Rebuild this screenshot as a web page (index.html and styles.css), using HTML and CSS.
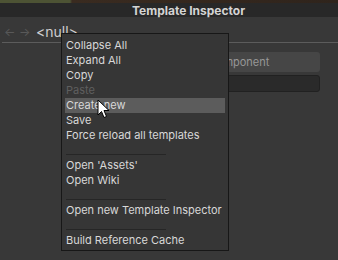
FILE: index.html
```html
<!DOCTYPE html>
<html lang="en">
  <head>
    <meta charset="UTF-8" />
    <title>Template Inspector</title>
    <link rel="stylesheet" href="styles.css">
  </head>
  <body>
    <div class="window">
      <div class="wallpaper"></div>
      <div class="titlebar">Template Inspector</div>
      <div class="toolbar">
        <span class="nav">&larr;</span>
        <span class="nav">&rarr;</span>
        <span class="target">&lt;null&gt;</span>
      </div>
      <div class="rule"></div>
      <div class="content">
        <div class="add-button">Add Component</div>
        <div class="search-field"></div>
      </div>

      <ul class="menu">
        <li class="item">Collapse All</li>
        <li class="item">Expand All</li>
        <li class="item">Copy</li>
        <li class="item disabled">Paste</li>
        <li class="item active">Create new</li>
        <li class="item">Save</li>
        <li class="item">Force reload all templates</li>
        <li class="separator"></li>
        <li class="item">Open 'Assets'</li>
        <li class="item">Open Wiki</li>
        <li class="separator"></li>
        <li class="item">Open new Template Inspector</li>
        <li class="separator"></li>
        <li class="item">Build Reference Cache</li>
      </ul>

      <svg class="cursor" width="13" height="20" viewBox="0 0 13 20">
        <path d="M1 1 L1 16 L4.5 12.5 L7 18.5 L9.5 17.5 L7 11.5 L12 11.5 Z" fill="#fff" stroke="#000" stroke-width="1" stroke-linejoin="round" />
      </svg>
    </div>
  </body>
</html>
```

FILE: styles.css
```css
* {
  margin: 0;
  padding: 0;
  box-sizing: border-box;
}

body {
  font-family: Inter, "Noto Sans", sans-serif;
  background: #383838;
  color: #d2d2d2;
}

.window {
  position: relative;
  width: 338px;
  height: 260px;
  overflow: hidden;
  background: #383838;
}

.wallpaper {
  height: 3px;
  background: linear-gradient(90deg, #4d5334 0, #4d5334 70px, #3a2b20 72px, #2f241c 100%);
}

.titlebar {
  height: 14px;
  background: #282828;
  color: #d4d4d4;
  font-weight: 700;
  font-size: 12px;
  line-height: 15px;
  padding-left: 132px;
}

.toolbar {
  height: 25px;
  display: flex;
  align-items: center;
  padding-left: 4px;
  padding-top: 3px;
}

.nav {
  color: #595959;
  font-size: 12px;
  width: 15px;
}

.target {
  margin-left: 2px;
  font-size: 14px;
  color: #cfcfcf;
}

.rule {
  height: 1px;
  margin-left: 2px;
  background: #5c5c5c;
}

.content {
  display: flex;
  flex-direction: column;
  align-items: flex-end;
  gap: 3px;
  padding: 9px 18px 0 0;
}

.add-button {
  width: 186px;
  height: 20px;
  border-radius: 3px;
  background: #464646;
  color: #979797;
  font-size: 11px;
  line-height: 20px;
  text-align: center;
}

.search-field {
  width: 186px;
  height: 17px;
  border-radius: 3px;
  background: #2a2a2a;
  border: 1px solid #212121;
}

/* context menu */
.menu {
  position: absolute;
  left: 61px;
  top: 33px;
  width: 168px;
  list-style: none;
  background: #363636;
  border: 1px solid #171717;
  padding: 4px 3px 2px;
}

.item {
  height: 15px;
  line-height: 15px;
  font-size: 11px;
  padding-left: 1px;
  color: #d8d8d8;
  white-space: nowrap;
}

.item.disabled {
  color: #5f5f5f;
}

.item.active {
  background: #5c5c5c;
}

.separator {
  height: 15px;
  padding-top: 11px;
  margin-left: 1px;
}

.separator::before {
  content: "";
  display: block;
  width: 100px;
  height: 1px;
  background: #262626;
}

.cursor {
  position: absolute;
  left: 97px;
  top: 99px;
}
```
